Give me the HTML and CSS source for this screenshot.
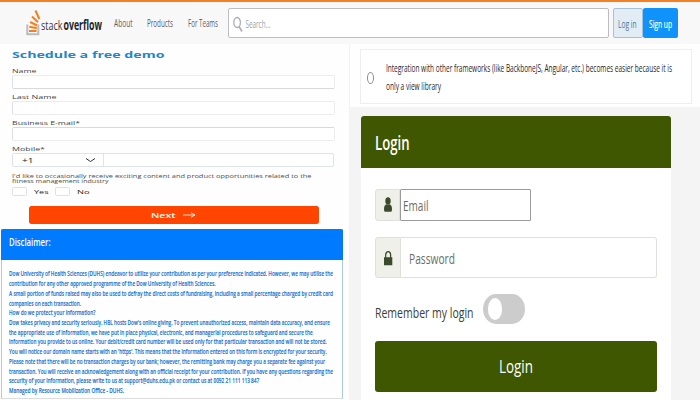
FILE: index.html
```html
<!DOCTYPE html>
<html lang="en">
<head>
<meta charset="utf-8">
<title>Forms</title>
<link rel="stylesheet" href="styles.css">
</head>
<body>
<header class="topbar">
  <svg class="logo" width="76" height="30">
    <path d="M1.3 16.5v9.800h11v-9.800" fill="none" stroke="#bcbbbb" stroke-width="2"/>
    <path d="M3 23h7.500M3.300 18.800l7.500 1.300M4.100 14l7 3.500M6 8.500l6 5.800M9.400 2.500l4 8.500" fill="none" stroke="#f48024" stroke-width="2.100"/>
    <text x="15" y="22" textLength="21.500" lengthAdjust="spacingAndGlyphs" class="brand">stack</text>
    <text x="37.500" y="22" textLength="38.500" lengthAdjust="spacingAndGlyphs" class="brand strong">overflow</text>
  </svg>
  <nav class="nav">
    <svg width="19" height="16"><text y="12" textLength="18.500" lengthAdjust="spacingAndGlyphs">About</text></svg>
    <svg width="26" height="16"><text y="12" textLength="26" lengthAdjust="spacingAndGlyphs">Products</text></svg>
    <svg width="30" height="16"><text y="12" textLength="30" lengthAdjust="spacingAndGlyphs">For Teams</text></svg>
  </nav>
  <div class="search">
    <svg width="50" height="20">
      <ellipse cx="4.100" cy="8.500" rx="3.300" ry="5" fill="none" stroke="#aaafb4" stroke-width="1.300"/>
      <path d="M6 12.500l3 5" stroke="#aaafb4" stroke-width="1.700"/>
      <text x="12.500" y="14" textLength="25" lengthAdjust="spacingAndGlyphs">Search...</text>
    </svg>
  </div>
  <div class="btn login"><svg width="19" height="18"><text y="13.500" textLength="18.500" lengthAdjust="spacingAndGlyphs">Log in</text></svg></div>
  <div class="btn signup"><svg width="23" height="18"><text y="13.500" textLength="23" lengthAdjust="spacingAndGlyphs">Sign up</text></svg></div>
</header>
<main class="columns">
  <section class="left">
    <form class="demo">
      <svg class="title"><text y="14" textLength="152.500" lengthAdjust="spacingAndGlyphs">Schedule a free demo</text></svg>
      <svg class="label"><text y="8" textLength="24.500" lengthAdjust="spacingAndGlyphs">Name</text></svg>
      <div class="field low"></div>
      <svg class="label"><text y="8" textLength="44.500" lengthAdjust="spacingAndGlyphs">Last Name</text></svg>
      <div class="field"></div>
      <svg class="label"><text y="8" textLength="68" lengthAdjust="spacingAndGlyphs">Business E-mail*</text></svg>
      <div class="field high"></div>
      <svg class="label"><text y="8" textLength="33" lengthAdjust="spacingAndGlyphs">Mobile*</text></svg>
      <div class="field phone">
        <div class="code">
          <svg width="90" height="12"><text x="9" y="8.800" textLength="11.500" lengthAdjust="spacingAndGlyphs">+1</text><path d="M73 4.500l4.500 3 4.500-3" fill="none" stroke="#333" stroke-width="1"/></svg>
        </div>
      </div>
      <svg class="consent">
        <text y="5.500" textLength="299.500" lengthAdjust="spacingAndGlyphs">I'd like to occasionally receive exciting content and product opportunities related to the</text>
        <text y="11.300" textLength="96.500" lengthAdjust="spacingAndGlyphs">fitness management industry</text>
      </svg>
      <div class="choices">
        <span class="check"></span>
        <svg width="21.500" height="10"><text y="7" textLength="14.500" lengthAdjust="spacingAndGlyphs">Yes</text></svg>
        <span class="check"></span>
        <svg width="20" height="10"><text y="7" textLength="12.500" lengthAdjust="spacingAndGlyphs">No</text></svg>
      </div>
      <div class="next">
        <svg width="46" height="12"><text y="8.800" textLength="24.500" lengthAdjust="spacingAndGlyphs">Next</text><path d="M32 6h12M40 3.800l4 2.200-4 2.200" fill="none" stroke="#fff" stroke-width=".8"/></svg>
      </div>
    </form>
    <article class="disclaimer">
      <div class="dhead"><svg width="42" height="16"><text y="12" textLength="41.500" lengthAdjust="spacingAndGlyphs">Disclaimer:</text></svg></div>
      <div class="dbody">
        <svg><text y="7.300" textLength="324" lengthAdjust="spacingAndGlyphs">Dow University of Health Sciences (DUHS) endeavor to utilize your contribution as per your preference indicated. However, we may utilise the</text></svg>
        <svg><text y="7.300" textLength="206.500" lengthAdjust="spacingAndGlyphs">contribution for any other approved programme of the Dow University of Health Sciences.</text></svg>
        <svg><text y="7.300" textLength="324" lengthAdjust="spacingAndGlyphs">A small portion of funds raised may also be used to defray the direct costs of fundraising, including a small percentage charged by credit card</text></svg>
        <svg><text y="7.300" textLength="72" lengthAdjust="spacingAndGlyphs">companies on each transaction.</text></svg>
        <svg><text y="7.300" textLength="86.500" lengthAdjust="spacingAndGlyphs">How do we protect your information?</text></svg>
        <svg><text y="7.300" textLength="321" lengthAdjust="spacingAndGlyphs">Dow takes privacy and security seriously. HBL hosts Dow's online giving. To prevent unauthorized access, maintain data accuracy, and ensure</text></svg>
        <svg><text y="7.300" textLength="303.700" lengthAdjust="spacingAndGlyphs">the appropriate use of information, we have put in place physical, electronic, and managerial procedures to safeguard and secure the</text></svg>
        <svg><text y="7.300" textLength="317.700" lengthAdjust="spacingAndGlyphs">information you provide to us online. Your debit/credit card number will be used only for that particular transaction and will not be stored.</text></svg>
        <svg><text y="7.300" textLength="317.700" lengthAdjust="spacingAndGlyphs">You will notice our domain name starts with an 'https'. This means that the information entered on this form is encrypted for your security.</text></svg>
        <svg><text y="7.300" textLength="316" lengthAdjust="spacingAndGlyphs">Please note that there will be no transaction charges by our bank; however, the remitting bank may charge you a separate fee against your</text></svg>
        <svg><text y="7.300" textLength="324" lengthAdjust="spacingAndGlyphs">transaction. You will receive an acknowledgement along with an official receipt for your contribution. If you have any questions regarding the</text></svg>
        <svg><text y="7.300" textLength="250.300" lengthAdjust="spacingAndGlyphs">security of your information, please write to us at support@duhs.edu.pk or contact us at 0092 21 111 113 847</text></svg>
        <svg><text y="7.300" textLength="115" lengthAdjust="spacingAndGlyphs">Managed by Resource Mobilization Office - DUHS.</text></svg>
      </div>
    </article>
  </section>
  <section class="right">
    <div class="quiz">
      <div class="option">
        <span class="radio"></span>
        <svg width="290" height="40">
          <text y="15" textLength="286" lengthAdjust="spacingAndGlyphs">Integration with other frameworks (like BackboneJS, Angular, etc.) becomes easier because it is</text>
          <text y="33" textLength="55" lengthAdjust="spacingAndGlyphs">only a view library</text>
        </svg>
      </div>
    </div>
    <div class="card">
      <div class="chead"><svg width="40" height="30"><text y="22" textLength="34.500" lengthAdjust="spacingAndGlyphs">Login</text></svg></div>
      <div class="cbody">
        <div class="row email">
          <div class="addon"><svg width="10" height="16"><ellipse cx="5" cy="4" rx="2.700" ry="3.700"/><path d="M1 12c0-3 1-4.500 2.500-4.800q1.500 1 3 0C8 7.500 9 9 9 12c0 2-.5 2.800-1.500 2.800h-5C1.500 14.800 1 14 1 12z"/></svg></div>
          <div class="box"><svg width="40" height="24"><text y="18" textLength="25.500" lengthAdjust="spacingAndGlyphs">Email</text></svg></div>
        </div>
        <div class="row password">
          <div class="addon"><svg width="10" height="16"><path d="M1 7.200h8.300v8H1z"/><path d="M2.700 8V5c0-4.500 4.900-4.500 4.900 0v3" fill="none" stroke="#3c4a2c" stroke-width="1.300"/></svg></div>
          <div class="box"><svg width="50" height="24"><text y="18" textLength="46" lengthAdjust="spacingAndGlyphs">Password</text></svg></div>
        </div>
        <div class="remember">
          <svg width="99" height="24"><text y="18" textLength="98.500" lengthAdjust="spacingAndGlyphs">Remember my login</text></svg>
          <span class="toggle"><span class="knob"></span></span>
        </div>
        <div class="submit"><svg width="34" height="28"><text y="20.500" textLength="34" lengthAdjust="spacingAndGlyphs">Login</text></svg></div>
      </div>
    </div>
  </section>
</main>
</body>
</html>
```
FILE: styles.css
```css
* { box-sizing: border-box; }
body {
  margin: 0;
  width: 700px;
  height: 400px;
  overflow: hidden;
  background: #fefefe;
  font-family: "Open Sans", "Noto Sans", sans-serif;
}
svg { display: block; flex: none; overflow: visible; }

.topbar {
  display: flex;
  align-items: flex-start;
  height: 44px;
  padding: 6px 0 0 26px;
  border-top: 2px solid #f48024;
  background: #f8f8f8;
}
.brand { font-size: 13.500px; fill: #3a3a3c; }
.strong { font-weight: 700; fill: #222426; }
.nav {
  display: flex;
  gap: 14.300px;
  margin: 7px 0 0 12px;
  font-size: 10px;
  fill: #5c6268;
}
.search {
  width: 381px;
  height: 30px;
  margin-left: 10.400px;
  padding: 5px 4px;
  border: 1px solid #bbbdc0;
  border-radius: 2px;
  background: #fff;
  font-size: 10.500px;
  fill: #9da2a7;
}
.btn {
  display: flex;
  align-items: center;
  justify-content: center;
  height: 30px;
  border-radius: 2px;
  font-size: 11.500px;
}
.login { width: 30px; margin-left: 4px; border: 1px solid #a8c0d4; background: #e1ecf4; fill: #4d7591; }
.signup { width: 35px; background: #0f93fb; fill: #fff; }
.signup text { stroke: #fff; stroke-width: .2px; }

.columns { display: grid; grid-template-columns: 350px 350px; height: 356px; }
.left { display: flex; flex-direction: column; border-right: 1px solid #f0f3f5; }
.demo { height: 184.500px; padding-left: 12px; }
.title { height: 21px; width: 200px; font: 700 8.500px "Open Sans", sans-serif; fill: #2287c8; }
.label { height: 10px; width: 200px; font-size: 5.900px; fill: #444; }
.field {
  width: 323px;
  height: 14px;
  margin-bottom: 2px;
  border: 1px solid #ebecee;
  border-left-color: #dbe0e6;
  border-radius: 2px;
  background: #fff;
}
.low { border-bottom-color: #d9dadd; }
.high { border-top-color: #d9dadd; }
.phone { width: 322px; margin: 0; border-color: #dfe4ea; }
.code { width: 91px; height: 12px; border-right: 1px solid #dfe4ea; font-size: 6.500px; fill: #222; }
.consent { width: 320px; height: 20px; margin-top: 5px; font-size: 5.300px; fill: #4c4c4c; }
.choices { display: flex; height: 10px; margin-top: -5px; font-size: 5.900px; fill: #222; }
.check { width: 14.500px; height: 9px; margin-right: 7px; border: 1px solid #dde2ea; border-radius: 1.500px; background: #fff; }
.next {
  display: flex;
  align-items: center;
  justify-content: center;
  width: 290px;
  height: 18.500px;
  margin: 8.500px 0 0 16.500px;
  border-radius: 2.500px;
  background: #ff4500;
  font-size: 7.200px;
  font-weight: 600;
  fill: #fff;
}
.disclaimer { width: 342px; height: 170.500px; margin-left: 1px; border: 1px solid #a9cbe4; border-top: 0; border-bottom-color: #ddd; }
.dhead { height: 31px; margin: 0 -1px; padding: 5.500px 8px; border-radius: 2px 2px 0 0; background: #007bff; fill: #fff; font-size: 10.500px; font-weight: 600; }
.dbody { padding: 9.800px 0 0 7px; font-size: 7.100px; font-weight: 600; fill: #1272cf; }
.dbody svg { width: 330px; height: 9.740px; }
.dbody text { stroke: #1272cf; stroke-width: .12px; }

.right { display: flex; flex-direction: column; background: #f4f4f4; }
.quiz { height: 63px; padding: 5px 8px 0 10px; background: #fefefe; }
.option { display: flex; align-items: center; width: 332px; height: 55px; padding-left: 6px; border: 1.500px solid #eee; font-size: 10px; fill: #24282c; background: #fff; }
.radio { width: 7px; height: 12px; margin: 2px 11.500px 0 0; border: 1px solid #8a8a8a; border-radius: 50%; }
.card { width: 310px; height: 285px; margin: 9px 0 0 11px; border-radius: 3px; background: #fff; overflow: hidden; }
.chead { height: 51.500px; padding: 12px 14px; background: #3e5700; fill: #fff; font-size: 19.500px; font-weight: 600; }
.cbody { padding: 21px 14px 0; }
.row { display: flex; }
.addon { display: flex; align-items: center; justify-content: center; width: 26px; border: 1px solid #dfe0da; border-radius: 3px 0 0 3px; background: #eff0ea; fill: #3c4a2c; }
.box { display: flex; align-items: center; background: #fff; fill: #6b6d61; font-size: 15px; }
.email { height: 32px; }
.email .addon { width: 25px; }
.email .box { width: 131px; padding-left: 2px; border: 1px solid #9b9b9b; border-radius: 1px; }
.password { height: 41px; margin-top: 16.500px; }
.password .box { width: 256px; padding-left: 8px; border: 1px solid #dfe0da; border-left: 0; border-radius: 0 3px 3px 0; }
.remember { display: flex; gap: 9px; align-items: center; height: 30px; margin-top: 16px; font-size: 15px; fill: #3b4133; }
.remember svg { margin-top: 5px; }
.toggle { display: flex; align-items: center; width: 41.500px; height: 30px; padding-left: 4.500px; border-radius: 13px / 15px; background: #ccc; }
.knob { width: 14.500px; height: 22px; border-radius: 50%; background: #fff; }
.submit { display: flex; align-items: center; justify-content: center; width: 282px; height: 51px; margin-top: 16.500px; border-radius: 3px; background: #3e5700; fill: #fff; font-size: 18px; }
```
